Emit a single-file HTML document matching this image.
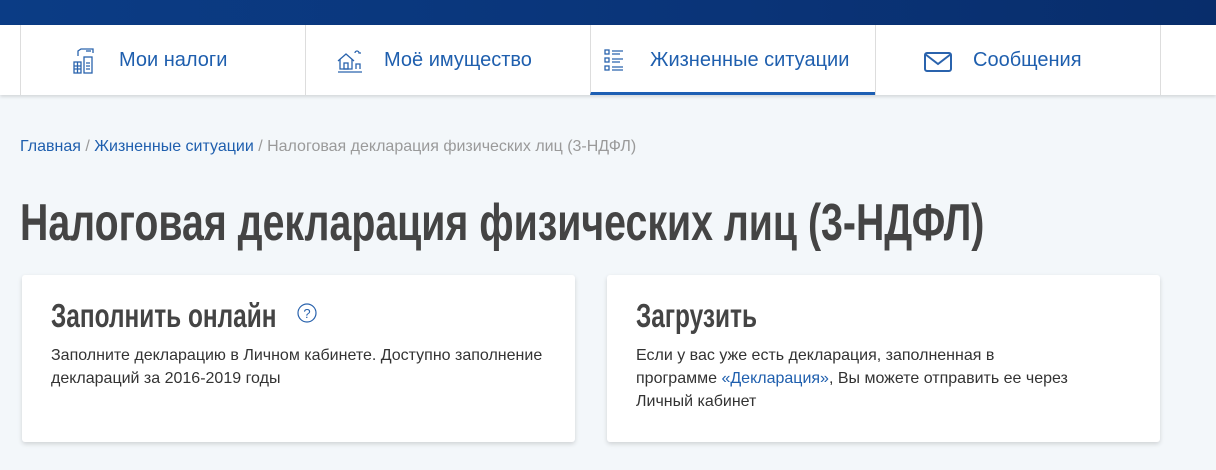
<!DOCTYPE html>
<html><head><meta charset="utf-8"><style>
*{margin:0;padding:0;box-sizing:border-box}
body{width:1216px;height:470px;overflow:hidden;background:#f3f7fa;font-family:"Liberation Sans","Noto Sans CJK SC",sans-serif;position:relative}
.top{position:absolute;left:0;top:0;width:1216px;height:25px;background:linear-gradient(90deg,#0b3c85,#0a3478 60%,#082d6b)}
.nav{position:absolute;left:0;top:25px;width:1216px;height:70px;background:#fff;box-shadow:0 2px 3px rgba(0,0,0,.12)}
.tab{position:absolute;top:0;height:70px;width:285px;border-left:1px solid #ddd;color:#1f5fae;font-size:20px}
.tab span{position:absolute;top:24px}
.tab svg{position:absolute;top:23px}
.act{border-bottom:3px solid #1d5fb3}
.bc{position:absolute;left:20px;top:138px;font-size:16px;color:#9a9a9a}
.bc a{color:#1f5fae;text-decoration:none}
h1{position:absolute;left:20px;top:193px;font-size:52px;font-weight:bold;color:#444;white-space:nowrap;transform:scaleX(.755);transform-origin:left top;line-height:60px}
.card{position:absolute;top:275px;width:553px;height:167px;background:#fff;border-radius:3px;box-shadow:0 2px 5px rgba(0,0,0,.15)}
.card h2{position:absolute;left:29px;top:21px;font-size:33px;font-weight:bold;color:#444;white-space:nowrap;transform:scaleX(.74);transform-origin:left top;line-height:40px}
.card p{position:absolute;left:29px;top:69px;width:505px;font-size:16px;line-height:23px;color:#333}
.card p a{color:#1f5fae;text-decoration:none}
</style></head><body>
<div class="top"></div>
<div class="nav">
 <div class="tab" style="left:20px">
  <svg style="left:52px" width="24" height="26" viewBox="0 0 24 26" fill="none" stroke="#2a63ad" stroke-width="1.3"><path d="M5 8V3l3-2h12v4"/><path d="M13 3h5"/><rect x="1" y="14" width="7" height="11"/><path d="M1 18h7M1 21h7M4.5 14v11"/><rect x="11" y="9" width="8" height="16"/><path d="M13 15h4M13 18h4M13 21h4"/></svg>
  <span style="left:98px">Мои налоги</span></div>
 <div class="tab" style="left:305px">
  <svg style="left:31px" width="26" height="26" viewBox="0 0 26 26" fill="none" stroke="#2a63ad" stroke-width="1.3"><path d="M1 13l8-7 8 7"/><path d="M3 11v10h12V11"/><rect x="7" y="15" width="4" height="6"/><path d="M18 5a2 2 0 0 1 4 0h2M1 24h24"/><path d="M19 21v-5h4v5"/></svg>
  <span style="left:78px">Моё имущество</span></div>
 <div class="tab act" style="left:590px">
  <svg style="left:13px" width="24" height="24" viewBox="0 0 24 24" fill="none" stroke="#2a63ad" stroke-width="1.3"><rect x="1" y="2" width="4" height="4"/><rect x="1" y="10" width="4" height="4"/><rect x="1" y="18" width="4" height="4"/><path d="M8 3h11M8 6h8M8 11h11M8 14h8M8 19h11M8 22h11"/></svg>
  <span style="left:59px">Жизненные ситуации</span></div>
 <div class="tab" style="left:875px">
  <svg style="left:48px;top:27px" width="28" height="20" viewBox="0 0 28 20" fill="none" stroke="#2a63ad" stroke-width="2"><rect x="1" y="1" width="26" height="18" rx="2"/><path d="M1 2l13 10 13-10"/></svg>
  <span style="left:97px">Сообщения</span></div>
 <div class="tab" style="left:1160px;width:56px"></div>
</div>
<div class="bc"><a>Главная</a> / <a>Жизненные ситуации</a> / Налоговая декларация физических лиц (3-НДФЛ)</div>
<h1>Налоговая декларация физических лиц (3-НДФЛ)</h1>
<div class="card" style="left:22px">
 <h2>Заполнить онлайн</h2>
 <svg style="position:absolute;left:275px;top:28px" width="20" height="20" viewBox="0 0 20 20"><circle cx="10" cy="10" r="9" fill="none" stroke="#2a63ad" stroke-width="1.2"/><text x="10" y="15" font-size="13" text-anchor="middle" fill="#2a63ad" font-family="Liberation Sans">?</text></svg>
 <p>Заполните декларацию в Личном кабинете. Доступно заполнение деклараций за 2016-2019 годы</p>
</div>
<div class="card" style="left:607px">
 <h2>Загрузить</h2>
 <p style="width:440px">Если у вас уже есть декларация, заполненная в программе <a>«Декларация»</a>, Вы можете отправить ее через Личный кабинет</p>
</div>
</body></html>
